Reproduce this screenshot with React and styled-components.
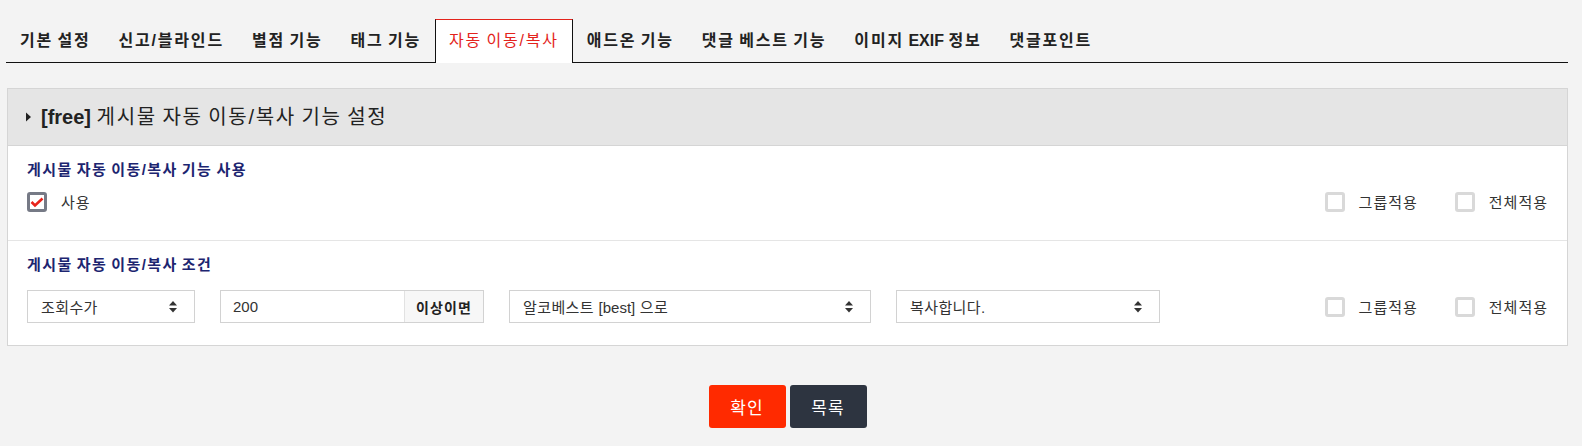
import styled, { createGlobalStyle } from "styled-components";

const GlobalStyle = createGlobalStyle`
  html, body {
    margin: 0;
    padding: 0;
    background: #f3f3f3;
  }
  body {
    font-family: "Liberation Sans", "Noto Sans CJK KR", sans-serif;
    color: #222;
  }
  * {
    box-sizing: border-box;
  }
`;

const tabs = [
  "기본 설정",
  "신고/블라인드",
  "별점 기능",
  "태그 기능",
  "자동 이동/복사",
  "애드온 기능",
  "댓글 베스트 기능",
  "이미지 EXIF 정보",
  "댓글포인트",
];

// hangul gets letter-spacing, latin runs are kept tight
function text(str) {
  return str
    .split(/([A-Za-z0-9[\]]+)/)
    .map((part, i) => (i % 2 ? <Latin key={i}>{part}</Latin> : part));
}

function SortArrows() {
  return (
    <svg width="8" height="12" viewBox="0 0 8 12">
      <polygon points="4,0 8,4.6 0,4.6" fill="#333" />
      <polygon points="0,7 8,7 4,11.6" fill="#333" />
    </svg>
  );
}

function Caret() {
  return (
    <svg width="5" height="10" viewBox="0 0 5 10">
      <polygon points="0,0.5 5,5 0,9.5" fill="#222" />
    </svg>
  );
}

function Select({ width, value }) {
  return (
    <SelectBox $width={width}>
      <span>{text(value)}</span>
      <SortArrows />
    </SelectBox>
  );
}

function Check({ checked, label }) {
  return (
    <CheckItem>
      <CheckBox $checked={checked}>
        {checked && (
          <svg width="14" height="14" viewBox="0 0 14 14">
            <polyline
              points="1.5,7 5,10.5 12.5,3.5"
              fill="none"
              stroke="#e8231b"
              strokeWidth="2.6"
            />
          </svg>
        )}
      </CheckBox>
      <span>{label}</span>
    </CheckItem>
  );
}

function ApplyOptions() {
  return (
    <Options>
      <Check label="그룹적용" />
      <Check label="전체적용" />
    </Options>
  );
}

export default function App() {
  return (
    <Page>
      <GlobalStyle />
      <TabBar>
        {tabs.map((name) => (
          <Tab key={name} $active={name === "자동 이동/복사"}>
            {text(name)}
          </Tab>
        ))}
      </TabBar>

      <Panel>
        <PanelHeader>
          <Caret />
          <Title>
            <b>[free]</b> 게시물 자동 이동/복사 기능 설정
          </Title>
        </PanelHeader>

        <Row $top={15}>
          <Label>게시물 자동 이동/복사 기능 사용</Label>
          <Controls $gap={6}>
            <Check checked label="사용" />
            <ApplyOptions />
          </Controls>
        </Row>

        <Row $top={15} $last>
          <Label>게시물 자동 이동/복사 조건</Label>
          <Controls $gap={16}>
            <Fields>
              <Select width={168} value="조회수가" />
              <InputGroup>
                <Input defaultValue="200" />
                <Addon>이상이면</Addon>
              </InputGroup>
              <Select width={362} value="알코베스트 [best] 으로" />
              <Select width={264} value="복사합니다." />
            </Fields>
            <ApplyOptions />
          </Controls>
        </Row>
      </Panel>

      <Buttons>
        <Button $color="#ff2a00">확인</Button>
        <Button $color="#2d3440">목록</Button>
      </Buttons>
    </Page>
  );
}

const Latin = styled.span`
  letter-spacing: 0;
`;

const Page = styled.div`
  padding: 19px 14px 20px 6px;
`;

const TabBar = styled.ul`
  display: flex;
  margin: 0;
  padding: 0;
  list-style: none;
  height: 44px;
  border-bottom: 1px solid #111;
`;

const Tab = styled.li`
  display: flex;
  align-items: center;
  height: 44px;
  margin-bottom: -1px;
  padding: 0 13px 1px;
  border: 1px solid transparent;
  border-bottom: 0;
  font-size: 16px;
  font-weight: bold;
  line-height: 20px;
  letter-spacing: 1.8px;
  word-spacing: -1.8px;
  white-space: pre;
  color: ${(p) => (p.$active ? "#e3231c" : "#222")};
  background: ${(p) => (p.$active ? "#fff" : "transparent")};
  ${(p) =>
    p.$active &&
    `
    border-color: #111;
    border-top-color: #e3231c;
    font-weight: normal;
  `}
`;

const Panel = styled.div`
  margin: 25px 0 0 1px;
  border: 1px solid #d5d5d5;
  background: #fff;
`;

const PanelHeader = styled.div`
  display: flex;
  align-items: center;
  gap: 10px;
  height: 57px;
  padding-left: 18px;
  background: #e5e5e5;
  border-bottom: 1px solid #d5d5d5;
`;

const Title = styled.h2`
  margin: 0;
  font-size: 20px;
  font-weight: normal;
  line-height: 24px;
  letter-spacing: 1.7px;
  word-spacing: -1.7px;
  color: #222;

  b {
    font-weight: bold;
    letter-spacing: 0;
  }
`;

const Row = styled.div`
  padding: ${(p) => p.$top}px 19px 22px;
  border-bottom: ${(p) => (p.$last ? "0" : "1px solid #e5e5e5")};
`;

const Label = styled.div`
  font-size: 15px;
  font-weight: bold;
  line-height: 18px;
  letter-spacing: 1.4px;
  word-spacing: -1.4px;
  color: #1d2570;
`;

const Controls = styled.div`
  display: flex;
  align-items: center;
  justify-content: space-between;
  height: 33px;
  margin-top: ${(p) => p.$gap}px;
`;

const Fields = styled.div`
  display: flex;
  gap: 25px;
`;

const SelectBox = styled.div`
  display: flex;
  align-items: center;
  justify-content: space-between;
  width: ${(p) => p.$width}px;
  height: 33px;
  padding: 0 17px 0 13px;
  border: 1px solid #d2d2d2;
  background: #fff;
  font-size: 15px;
  letter-spacing: 0.4px;
  white-space: pre;
  color: #333;
`;

const InputGroup = styled.div`
  display: flex;
  width: 264px;
  height: 33px;
  border: 1px solid #d2d2d2;
`;

const Input = styled.input`
  width: 183px;
  height: 100%;
  padding: 0 12px;
  border: 0;
  outline: none;
  font-family: inherit;
  font-size: 15px;
  color: #333;
`;

const Addon = styled.div`
  display: flex;
  align-items: center;
  justify-content: center;
  flex: 1;
  border-left: 1px solid #e2e2e2;
  background: #f7f7f7;
  font-size: 14px;
  font-weight: bold;
  letter-spacing: 1.1px;
  color: #222;
`;

const Options = styled.div`
  display: flex;
  gap: 37px;
`;

const CheckItem = styled.label`
  display: flex;
  align-items: center;
  gap: 14px;
  font-size: 15px;
  letter-spacing: 1px;
  color: #333;
`;

const CheckBox = styled.span`
  display: flex;
  align-items: center;
  justify-content: center;
  width: 20px;
  height: 20px;
  border: 3px solid ${(p) => (p.$checked ? "#767a86" : "#d9d9d9")};
  border-radius: 3px;
  background: #fff;
`;

const Buttons = styled.div`
  display: flex;
  justify-content: center;
  gap: 4px;
  margin: 39px 0 0 1px;
`;

const Button = styled.button`
  width: 77px;
  height: 43px;
  border: 0;
  border-radius: 3px;
  background: ${(p) => p.$color};
  font-family: inherit;
  font-size: 17px;
  letter-spacing: 1px;
  color: #fff;
  cursor: pointer;
`;
